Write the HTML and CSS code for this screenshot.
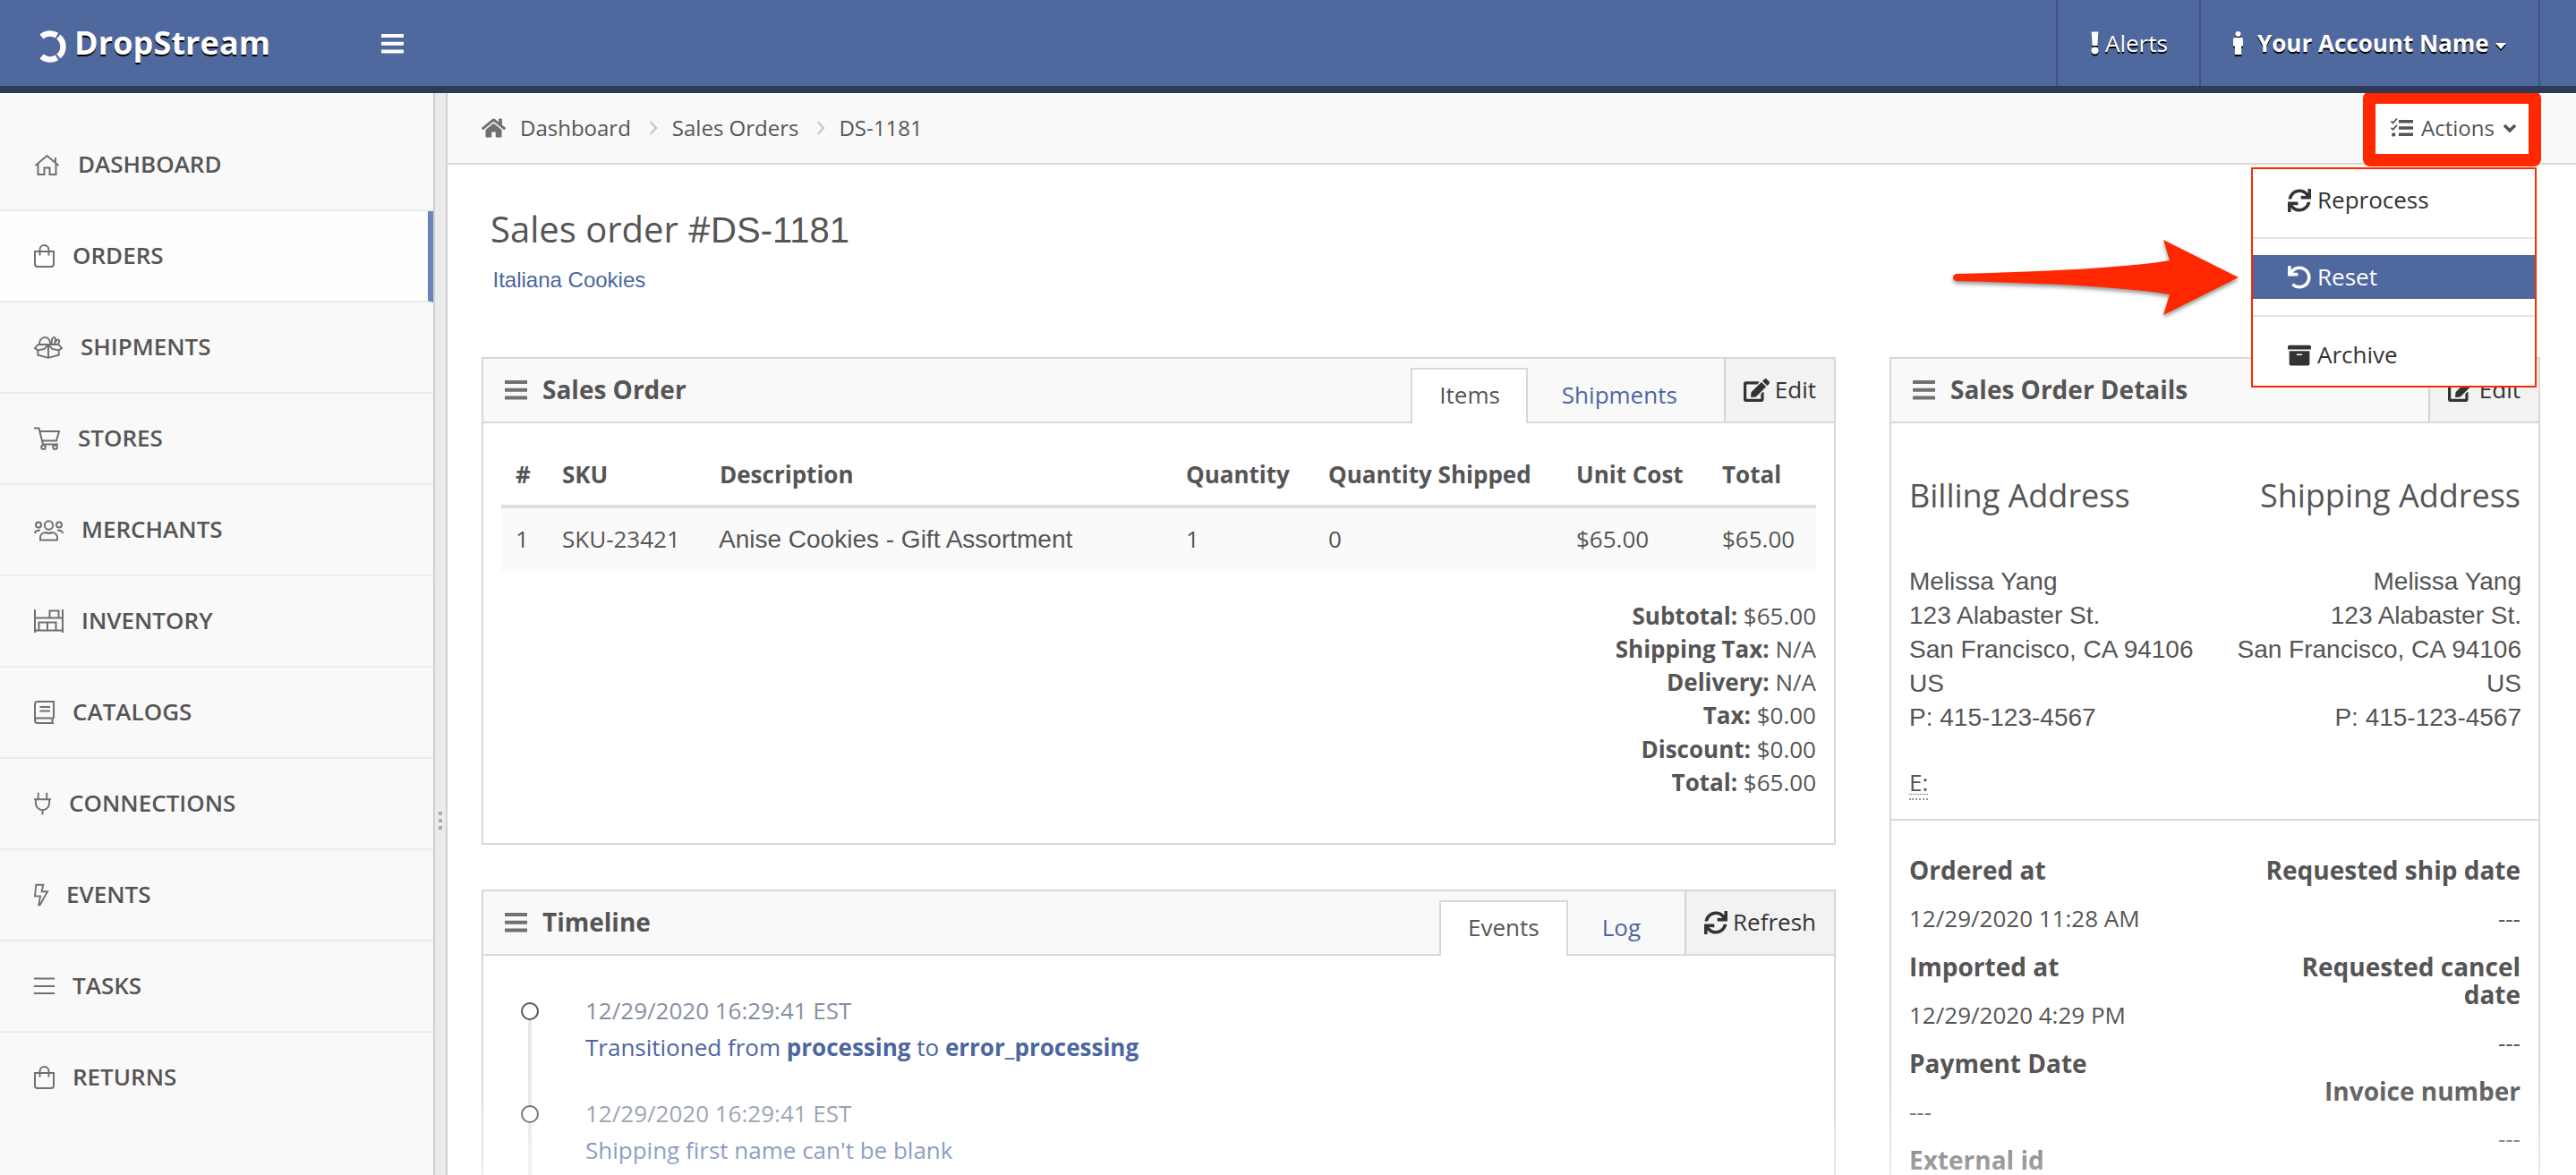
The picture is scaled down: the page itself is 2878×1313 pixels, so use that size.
FILE: index.html
```
<!DOCTYPE html>
<html lang="en">
<head>
<meta charset="utf-8">
<title>Sales order #DS-1181 - DropStream</title>
<link rel="stylesheet" href="styles.css">
</head>
<body>
<svg class="sprite" aria-hidden="true">
  <symbol id="sync" viewBox="0 0 512 512"><path d="M440.65 12.57l4 82.77A247.16 247.16 0 0 0 255.83 8C134.73 8 33.91 94.92 12.29 209.82A12 12 0 0 0 24.09 224h49.05a12 12 0 0 0 11.67-9.26 175.91 175.91 0 0 1 317-56.94l-101.46-4.86a12 12 0 0 0-12.57 12v47.41a12 12 0 0 0 12 12H500a12 12 0 0 0 12-12V12a12 12 0 0 0-12-12h-47.37a12 12 0 0 0-11.98 12.57zM255.83 432a175.61 175.61 0 0 1-146-77.8l101.8 4.87a12 12 0 0 0 12.57-12v-47.4a12 12 0 0 0-12-12H12a12 12 0 0 0-12 12V500a12 12 0 0 0 12 12h47.35a12 12 0 0 0 12-12.6l-4.15-82.57A247.17 247.17 0 0 0 255.83 504c121.11 0 221.93-86.92 243.55-201.82a12 12 0 0 0-11.8-14.18h-49.05a12 12 0 0 0-11.67 9.26A175.86 175.86 0 0 1 255.83 432z"/></symbol>
  <symbol id="undo" viewBox="0 0 512 512"><path d="M212.333 224.333H12c-6.627 0-12-5.373-12-12V12C0 5.373 5.373 0 12 0h48c6.627 0 12 5.373 12 12v78.112C117.773 39.279 184.26 7.47 258.175 8.007c136.906.994 246.448 111.623 246.157 248.532C504.041 393.258 393.12 504 256.333 504c-64.089 0-122.496-24.313-166.51-64.215-5.099-4.622-5.334-12.554-.467-17.42l33.967-33.967c4.474-4.474 11.662-4.717 16.401-.525C170.76 415.336 211.58 432 256.333 432c97.268 0 176-78.716 176-176 0-97.267-78.716-176-176-176-58.496 0-110.28 28.476-142.274 72.333h98.274c6.627 0 12 5.373 12 12v48c0 6.627-5.373 12-12 12z"/></symbol>
  <symbol id="archive" viewBox="0 0 512 512"><path d="M32 448c0 17.7 14.3 32 32 32h384c17.7 0 32-14.3 32-32V160H32v288zm160-212c0-6.6 5.4-12 12-12h104c6.6 0 12 5.4 12 12v8c0 6.6-5.4 12-12 12H204c-6.6 0-12-5.4-12-12v-8zM480 32H32C14.3 32 0 46.3 0 64v48c0 8.8 7.2 16 16 16h480c8.8 0 16-7.2 16-16V64c0-17.7-14.3-32-32-32z"/></symbol>
  <symbol id="edit" viewBox="0 0 576 512"><path d="M402.6 83.2l90.2 90.2c3.8 3.8 3.8 10 0 13.8L274.4 405.6l-92.8 10.3c-12.4 1.4-22.9-9.1-21.5-21.5l10.3-92.8L388.8 83.2c3.8-3.8 10-3.8 13.8 0zm162-22.9l-48.8-48.8c-15.2-15.2-39.9-15.2-55.2 0l-35.4 35.4c-3.8 3.8-3.8 10 0 13.8l90.2 90.2c3.8 3.8 10 3.8 13.8 0l35.4-35.4c15.2-15.3 15.2-40 0-55.2zM384 346.2V448H64V128h229.8c3.2 0 6.2-1.3 8.5-3.5l40-40c7.6-7.6 2.2-20.5-8.5-20.5H48C21.5 64 0 85.5 0 112v352c0 26.5 21.5 48 48 48h352c26.5 0 48-21.5 48-48V306.2c0-10.7-12.9-16-20.5-8.5l-40 40c-2.2 2.3-3.5 5.3-3.5 8.5z"/></symbol>
  <symbol id="bars" viewBox="0 0 25 22"><path d="M0 0h25v4H0zM0 8.8h25v4H0zM0 17.6h25v4H0z"/></symbol>
  <symbol id="bag" viewBox="0 0 23 26"><path d="M1 8h21v14a3 3 0 0 1-3 3H4a3 3 0 0 1-3-3zM6.500 12.500V6a5 5 0 0 1 10 0v6.500"/></symbol>
</svg>

<header class="topbar">
  <div class="brand">
    <svg class="logo" viewBox="0 0 30 36"><g fill="none" stroke="#fff" stroke-width="6.500"><path d="M2.500 7A14.500 14.500 0 0 1 19.500 5.600"/><path d="M21.300 6.900A14.500 14.500 0 0 1 21.300 29.100"/><path d="M19.500 30.400A14.500 14.500 0 0 1 2.500 29"/></g></svg>
    <span>DropStream</span>
  </div>
  <svg class="toggle" viewBox="0 0 25 22"><use href="#bars"/></svg>
  <nav class="topnav">
    <a class="alerts"><svg viewBox="0 0 9 26" width="9" height="26"><path d="M.5.500h8L7.500 16h-6z"/><circle cx="4.500" cy="21.500" r="4"/></svg>Alerts</a>
    <a class="account"><svg viewBox="0 0 11 26" width="11" height="26"><circle cx="5.500" cy="3" r="3"/><path d="M2 7h7a2 2 0 0 1 2 2v7.500H9.200V26H1.800v-9.500H0V9a2 2 0 0 1 2-2z"/></svg><b>Your Account Name</b><i class="caret"></i></a>
    <span class="edge"></span>
  </nav>
</header>

<div class="shell">
  <ul class="sidebar">
    <li><svg width="29" height="26" viewBox="0 0 28 26"><path d="M1 14L14 3l13 11M4 12v12h7v-7.500h6V24h7V12M23.500 10V5"/></svg>DASHBOARD</li>
    <li class="active"><svg width="23" height="26"><use href="#bag"/></svg>ORDERS</li>
    <li><svg width="32" height="26" viewBox="0 0 33 26"><path d="M4.500 10L1 14l3.500 2.500 7.500-1.500 4.500-5 4.500 5 7.500 1.500L32 14l-3.500-4M4.500 10l12 0L28.500 10M4.500 16.500V22l12 3.200L28.500 22v-5.500M16.500 10v15M6 10c0-5 3-8.500 6.500-8.500S18.500 5 19 10M20.500 9.500c-.5-5 .5-8 2.500-8s2 3.500.5 8M24 8.500c1.500-3.500 3-5 4.500-4s.5 3.500-1.500 5.500"/></svg>SHIPMENTS</li>
    <li><svg width="29" height="26" viewBox="0 0 29 26"><path d="M0 1.500h5.500L10 19.500h17M6.500 5H28l-3 10.500H9"/><circle cx="10.500" cy="22.800" r="2.300"/><circle cx="23.500" cy="22.800" r="2.300"/></svg>STORES</li>
    <li><svg width="33" height="26" viewBox="0 0 33 26"><circle cx="16.500" cy="8" r="4.700"/><circle cx="5" cy="7.500" r="3"/><circle cx="28" cy="7.500" r="3"/><path d="M7 24.500v-3a6 6 0 0 1 6-5.500c2 1 5 1 7 0a6 6 0 0 1 6 5.500v3zM1 17c0-2.500 1.500-3.500 6-3.500M32 17c0-2.500-1.500-3.500-6-3.500"/></svg>MERCHANTS</li>
    <li><svg width="33" height="26" viewBox="0 0 33 26"><path d="M1 0v26M32 0v26M1 9.500h31M1 23.500h31M17.500 9.500V1.500h10v8M5.500 23.500v-9h19v9M15 14.500v9"/></svg>INVENTORY</li>
    <li><svg width="23" height="26" viewBox="0 0 23 26"><path d="M22 19.500V1H4a3 3 0 0 0-3 3v18a3 3 0 0 0 3 3h18M22 19.500H4a2.500 2.500 0 0 0-2.800 2M20.500 19.500V25M6.500 7H18M6.500 11.500H18"/></svg>CATALOGS</li>
    <li><svg width="19" height="26" viewBox="0 0 20 26"><path d="M5 0v7M15 0v7M0 8h20M2 8v4.500a8 8 0 0 0 16 0V8M10 20.500V26"/></svg>CONNECTIONS</li>
    <li><svg width="16" height="26" viewBox="0 0 17 26"><path d="M2.500 1h8.500l-2 8h7L7 25H5.500L7.500 14.500H1z"/></svg>EVENTS</li>
    <li><svg width="23" height="26" viewBox="0 0 23 26"><path d="M0 4.500h23M0 13h23M0 21h23"/></svg>TASKS</li>
    <li><svg width="23" height="26"><use href="#bag"/></svg>RETURNS</li>
  </ul>
  <div class="splitter"><i></i><i></i><i></i></div>

  <main class="content">
    <div class="crumbs">
      <svg class="house" viewBox="0 0 576 512"><path d="M280.370 148.260L96 300.110V464a16 16 0 0 0 16 16l112.060-.29a16 16 0 0 0 15.920-16V368a16 16 0 0 1 16-16h64a16 16 0 0 1 16 16v95.640a16 16 0 0 0 16 16.050L464 480a16 16 0 0 0 16-16V300L295.670 148.260a12.190 12.190 0 0 0-15.300 0zM571.600 251.470L488 182.560V44.050a12 12 0 0 0-12-12h-56a12 12 0 0 0-12 12v72.610L318.470 43a48 48 0 0 0-61 0L4.340 251.470a12 12 0 0 0-1.600 16.900l25.500 31A12 12 0 0 0 45.150 301l235.220-193.740a12.190 12.190 0 0 1 15.300 0L530.900 301a12 12 0 0 0 16.900-1.600l25.500-31a12 12 0 0 0-1.700-16.930z"/></svg>
      <span>Dashboard</span>
      <svg class="sep" viewBox="0 0 10 16"><path d="M1.500 1l6.500 7-6.500 7"/></svg>
      <span>Sales Orders</span>
      <svg class="sep" viewBox="0 0 10 16"><path d="M1.500 1l6.500 7-6.500 7"/></svg>
      <span>DS-1181</span>
      <div class="actions">
        <svg width="25" height="22" viewBox="0 0 25 22"><path class="fill" d="M9 2h16v3.500H9zM9 9.300h16v3.500H9zM9 16.600h16v3.500H9z"/><circle class="fill" cx="3.200" cy="18.400" r="2.200"/><path class="line" d="M.5 3.500l2 2 4.500-5M.5 10.800l2 2 4.500-5"/></svg>
        Actions
        <svg width="16" height="11" viewBox="0 0 16 11"><path class="line thick" d="M2 2l6 6 6-6"/></svg>
        <ul class="menu">
          <li><svg><use href="#sync"/></svg>Reprocess</li>
          <li class="rule"></li>
          <li class="selected"><svg><use href="#undo"/></svg>Reset</li>
          <li class="rule"></li>
          <li><svg><use href="#archive"/></svg>Archive</li>
        </ul>
        <svg class="arrow" width="330" height="96" viewBox="0 0 330 96"><path d="M8 41Q180 37 246 26L239 3 323 45 239 87 246 64Q180 53 8 49Q4 48.500 4 45T8 41z"/></svg>
      </div>
    </div>

    <h1>Sales order #<span class="sans">DS-1181</span></h1>
    <a class="merchant">Italiana Cookies</a>

    <div class="columns">
      <div class="left">
        <section class="panel order">
          <div class="head">
            <svg class="bars"><use href="#bars"/></svg><h2>Sales Order</h2>
            <div class="tabs"><a class="tab on">Items</a><a class="tab">Shipments</a></div>
            <a class="button"><svg class="wide"><use href="#edit"/></svg>Edit</a>
          </div>
          <table>
            <colgroup><col class="c1"><col class="c2"><col class="c3"><col class="c4"><col class="c5"><col class="c6"><col></colgroup>
            <thead><tr><th>#</th><th>SKU</th><th>Description</th><th>Quantity</th><th>Quantity Shipped</th><th>Unit Cost</th><th>Total</th></tr></thead>
            <tbody><tr><td>1</td><td>SKU-23421</td><td class="sans desc">Anise Cookies - Gift Assortment</td><td>1</td><td>0</td><td>$65.00</td><td>$65.00</td></tr></tbody>
          </table>
          <div class="totals">
            <div><b>Subtotal:</b> $65.00</div>
            <div><b>Shipping Tax:</b> N/A</div>
            <div><b>Delivery:</b> N/A</div>
            <div><b>Tax:</b> $0.00</div>
            <div><b>Discount:</b> $0.00</div>
            <div><b>Total:</b> $65.00</div>
          </div>
        </section>
        <section class="panel timeline">
          <div class="head">
            <svg class="bars"><use href="#bars"/></svg><h2>Timeline</h2>
            <div class="tabs"><a class="tab on">Events</a><a class="tab">Log</a></div>
            <a class="button"><svg><use href="#sync"/></svg>Refresh</a>
          </div>
          <ol>
            <li><time>12/29/2020 16:29:41 EST</time><p>Transitioned from <b>processing</b> to <b>error_processing</b></p></li>
            <li><time>12/29/2020 16:29:41 EST</time><p>Shipping first name can't be blank</p></li>
          </ol>
        </section>
      </div>
      <section class="panel details">
        <div class="head">
          <svg class="bars"><use href="#bars"/></svg><h2>Sales Order Details</h2>
          <a class="button"><svg class="wide"><use href="#edit"/></svg>Edit</a>
        </div>
        <div class="addresses">
          <div>
            <h3>Billing Address</h3>
            <address class="sans">Melissa Yang<br>123 Alabaster St.<br>San Francisco, CA 94106<br>US<br>P: 415-123-4567</address>
            <abbr>E:</abbr>
          </div>
          <div class="right">
            <h3>Shipping Address</h3>
            <address class="sans">Melissa Yang<br>123 Alabaster St.<br>San Francisco, CA 94106<br>US<br>P: 415-123-4567</address>
          </div>
        </div>
        <div class="facts">
          <div><h4>Ordered at</h4><p>12/29/2020 11:28 AM</p><h4>Imported at</h4><p>12/29/2020 4:29 PM</p><h4>Payment Date</h4><p>---</p><h4>External id</h4></div>
          <div class="right"><h4>Requested ship date</h4><p>---</p><h4>Requested cancel date</h4><p>---</p><h4>Invoice number</h4><p>---</p></div>
        </div>
      </section>
    </div>
    <div class="fade"></div>
  </main>
</div>
</body>
</html>
```
FILE: styles.css
```
*, *::before, *::after { box-sizing: border-box; }
body {
  margin: 0; width: 2878px; height: 1313px; overflow: hidden;
  background: #fff; color: #555;
  font: 26px/37.14px "Open Sans", "Noto Sans", sans-serif;
}
h1, h2, h3, h4, p, ul, ol { margin: 0; padding: 0; font-weight: 400; list-style: none; }
b { font-weight: 700; }
.sprite { display: none; }
.sans { font-family: "Liberation Sans", Arial, sans-serif; }
.right { text-align: right; }

/* top bar */
.topbar { display: flex; align-items: center; height: 104px; background: #4f689e; border-bottom: 8px solid #2d3a58; color: #fff; }
.brand { display: flex; align-items: center; width: 426px; padding-left: 44px; gap: 9px; font-size: 36px; font-weight: 700; line-height: 96px; text-shadow: 0 2px 0 #000; }
.brand span { letter-spacing: .1px; }
.logo { width: 30px; height: 36px; margin-top: 8px; }
.toggle { width: 25px; height: 22px; fill: #fff; margin-top: 2px; }
.topnav { display: flex; margin-left: auto; height: 96px; line-height: 96px; }
.topnav > * { display: flex; align-items: center; border-left: 2px solid #3f5480; }
.topnav svg { fill: #fff; filter: drop-shadow(0 2px 0 #000); }
.alerts { width: 160px; padding-left: 37px; gap: 7px; text-shadow: 0 2px 0 #000; }
.account { width: 379px; padding-left: 36px; gap: 16px; text-shadow: 0 2px 0 #000; }
.caret { margin: 7px 0 0 -9px; border: 6px solid transparent; border-top: 7px solid #fff; border-bottom: 0; filter: drop-shadow(0 2px 0 #000); }
.edge { width: 42px; }

.shell { display: flex; height: 1209px; overflow: hidden; }

/* sidebar */
.sidebar { width: 484px; padding-top: 30px; background: #f9f9f9; }
.sidebar li { display: flex; align-items: center; gap: 20px; height: 102px; padding-left: 38px; border-bottom: 2px solid #ebebeb; font-weight: 600; text-shadow: 0 2px 0 #fff; }
.sidebar li:last-child { border-bottom-color: transparent; }
.sidebar svg { fill: none; stroke: #707070; stroke-width: 2; overflow: visible; }
.sidebar .active { background: #fdfdfd; border-right: 6px solid #6a83b8; }
.splitter { display: flex; flex-direction: column; align-items: center; gap: 4px; width: 16px; padding-top: 803px; background: #ebebeb; border: 2px solid #d0d0d0; border-width: 0 2px; }
.splitter i { width: 4px; height: 4px; background: #aaa; }

.content { position: relative; width: 2378px; }

/* breadcrumbs */
.crumbs { display: flex; align-items: center; height: 80px; padding-left: 38px; background: #f9f9f9; border-bottom: 2px solid #d8d8d8; font-size: 24px; }
.house { width: 27px; height: 24px; fill: #707070; margin-right: 16px; }
.sep { width: 10px; height: 16px; margin: 0 16px 0 20px; fill: none; stroke: #c8c8c8; stroke-width: 2.500px; }
.sep ~ .sep { margin-right: 15px; }
.actions { position: relative; display: flex; align-items: center; width: 199px; height: 84px; margin: 2px 39px 0 auto; border: 14px solid #ff2800; border-radius: 8px; background: #fff; padding: 0 0 2px 17px; gap: 9px; }
.actions .fill { fill: #555; }
.actions .line { fill: none; stroke: #555; stroke-width: 1.800; }
.actions .thick { stroke-width: 3.500; }
.actions .menu { position: absolute; top: 71px; right: -9px; z-index: 3; width: 319px; height: 246px; padding-top: 10px; border: 2px solid #ff2800; background: #fff; color: #333; font-size: 26px; }
.menu li { display: flex; align-items: center; gap: 7px; height: 49px; padding-left: 39px; }
.menu .rule { height: 2px; margin: 17px 0 18px; background: #e4e4e4; }
.menu .selected { background: #4f689e; color: #fff; }
.menu .selected + .rule { margin-top: 18px; }
.menu svg { width: 26px; height: 26px; fill: currentColor; }
.actions .arrow { position: absolute; top: 149px; left: -476px; fill: #ff2800; filter: drop-shadow(0 3px 2px rgba(0,0,0,.4)); }

h1 { margin: 50px 0 0 48px; font-size: 40px; line-height: 44px; }
h1 .sans { line-height: 1; }
.merchant { display: block; margin: 18px 0 0 50.5px; font: 24px/34px "Liberation Sans", Arial, sans-serif; color: #4c669f; }
.columns { display: flex; gap: 60px; margin-top: 69px; padding-left: 38px; }
.left { width: 1513px; }

/* panels */
.panel { border: 2px solid #d8d8d8; overflow: hidden; }
.order { height: 545px; }
.timeline { height: 319px; margin-top: 50px; border-bottom: 0; }
.details { width: 727px; height: 914px; border-bottom: 0; }
.head { display: flex; align-items: center; height: 72px; padding-left: 24px; background: #f9f9f9; border-bottom: 2px solid #d8d8d8; }
.bars { width: 25px; height: 22px; fill: #707070; margin-top: -1px; }
.head h2 { margin: -1px 0 0 17px; font-size: 28px; font-weight: 700; }
.tabs { display: flex; align-self: flex-end; margin-left: auto; margin-bottom: -2px; }
.order .tabs { margin-right: 2px; }
.tab { height: 62px; padding: 10px 32px 0; border: 2px solid transparent; color: #4c669f; }
.tab.on { padding: 10px 30px 0; background: #fff; border-color: #d8d8d8; border-bottom: 0; color: #555; margin-right: 4px; }
.order .tab.on { padding-right: 29px; }
.timeline .tabs { margin-right: -1px; }
.button { display: flex; align-items: center; gap: 6px; height: 70px; padding: 0 20px; margin-left: 16px; border-left: 2px solid #d4d4d4; background: #f2f2f2; color: #333; }
.button svg { width: 26px; height: 26px; fill: #333; }
.button .wide { width: 29px; }
.details .button { margin-left: auto; }

/* items table */
table { width: 1469px; margin: 24px 0 0 20px; border-collapse: separate; border-spacing: 0; table-layout: fixed; }
.c1 { width: 52px; } .c2 { width: 176px; } .c3 { width: 522px; } .c4 { width: 158px; } .c5 { width: 278px; } .c6 { width: 162px; }
th, td { padding: 0 0 0 16px; text-align: left; white-space: nowrap; }
th { height: 71px; font-weight: 700; border-bottom: 4px solid #ddd; }
td { height: 70px; background: #fafafa; }
td.desc { padding-left: 15px; font-size: 28px; }
th:nth-child(4), td:nth-child(4), th:nth-child(6), td:nth-child(6) { padding-left: 15px; }
.totals { padding: 32px 20px 0 0; text-align: right; }

/* timeline */
.timeline ol { padding: 41px 0 0 42px; }
.timeline li { position: relative; height: 114.6px; margin-left: 8px; padding-left: 64px; line-height: 41.2px; }
.timeline li::before { content: ""; position: absolute; left: -8px; top: 11px; width: 20px; height: 20px; border: 2px solid #555; border-radius: 50%; background: #fff; }
.timeline li::after { content: ""; position: absolute; left: 0; top: 31px; width: 4px; height: 95px; background: #e5e8ec; }
.timeline time { display: block; color: #8590a2; }
.timeline p { color: #4c669f; }

/* order details */
.addresses { display: flex; justify-content: space-between; height: 444px; padding: 59px 20px 0; border-bottom: 2px solid #d8d8d8; }
h3 { font-size: 36px; line-height: 44px; }
address { margin-top: 55px; font-size: 28px; font-style: normal; line-height: 38.1px; white-space: nowrap; }
.right address { margin-right: -1px; }
abbr { display: inline-block; margin-top: 35px; line-height: 36px; border-bottom: 2px dotted #999; text-decoration: underline dotted 1px; text-underline-offset: 3px; }
.facts { display: flex; justify-content: space-between; padding: 20px 20px 0; }
.facts .right { width: 300px; }
h4 { margin: 20px 0; font-size: 28px; line-height: 30.8px; font-weight: 700; }
.fade { position: absolute; left: 0; right: 0; bottom: 0; height: 115px; background: linear-gradient(rgba(255,255,255,0), rgba(255,255,255,.47)); }
```
